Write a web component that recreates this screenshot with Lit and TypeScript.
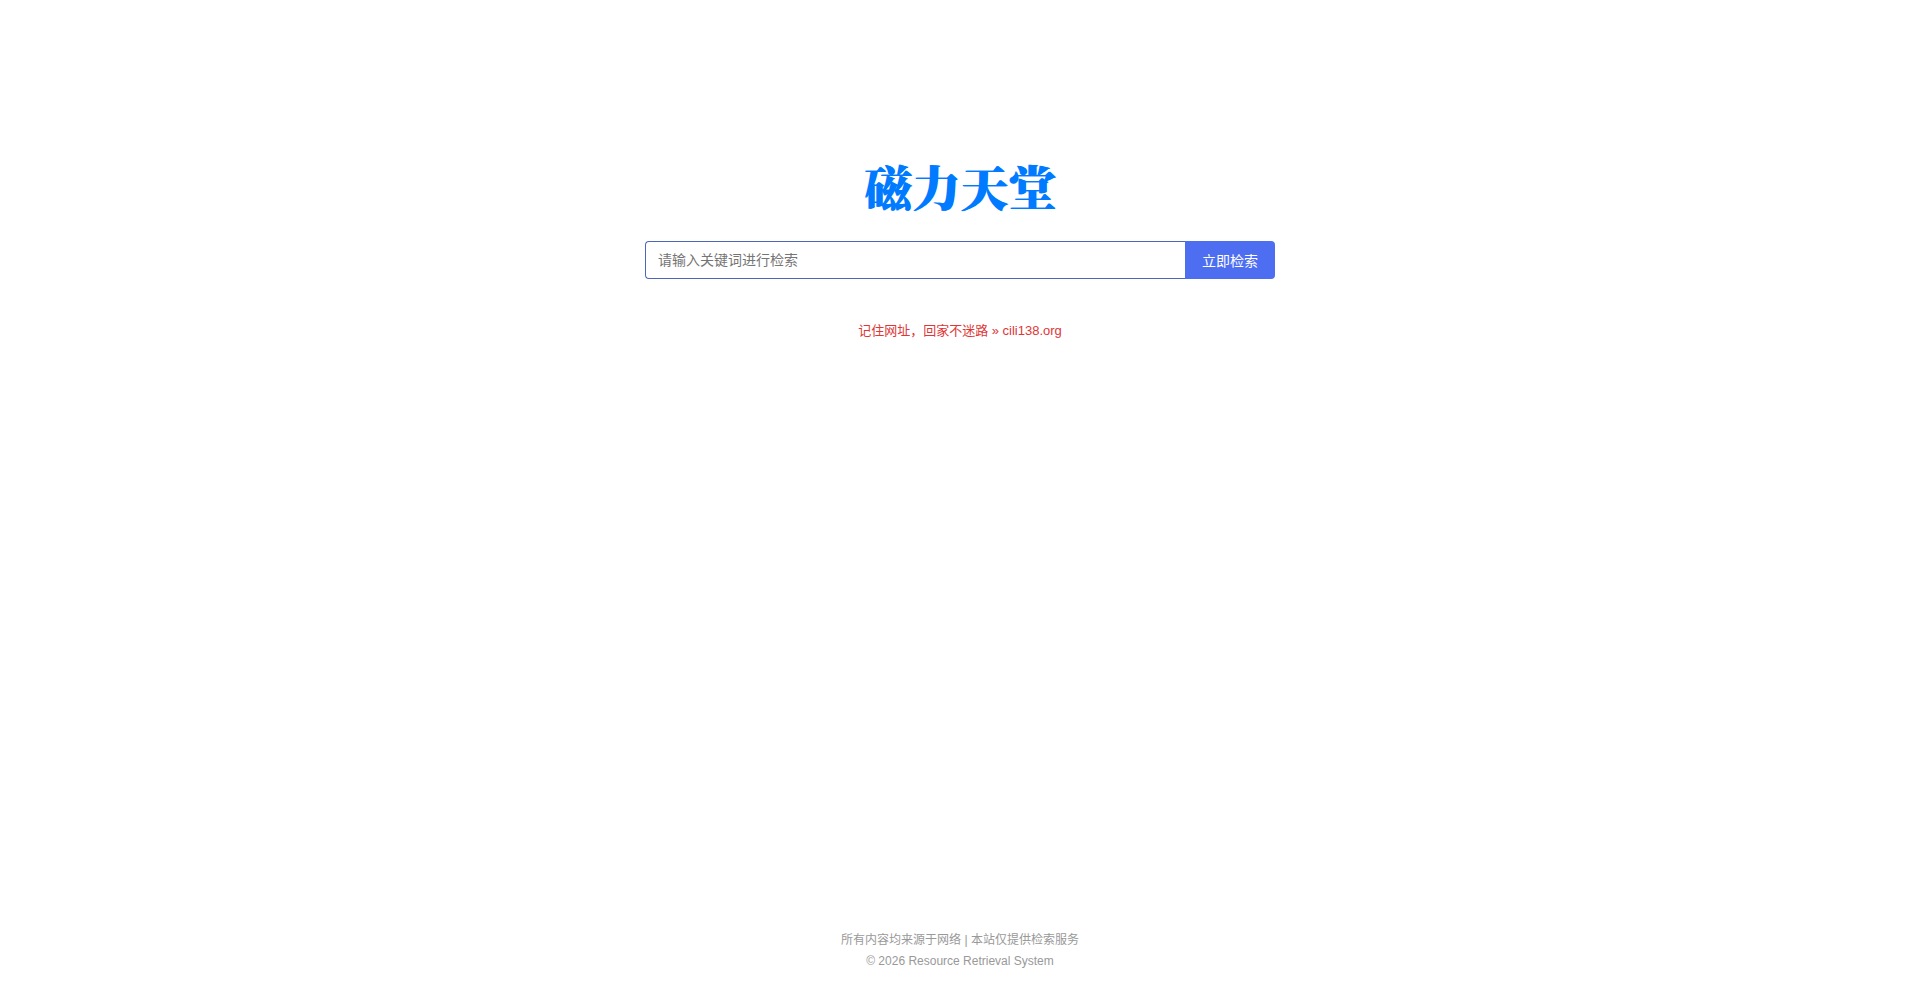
import { LitElement, html, css } from "lit";
import { customElement } from "lit/decorators.js";

@customElement("app-root")
export class AppRoot extends LitElement {
  static styles = css`
    :host {
      display: flex;
      flex-direction: column;
      align-items: center;
      box-sizing: border-box;
      min-height: 100vh;
      padding: 150px 16px 21px;
      background: #fff;
      font-family: "Liberation Sans", "Noto Sans CJK SC", sans-serif;
      font-size: 14px;
    }
    .logo {
      margin: 0;
      color: #007bff;
      font-family: "Noto Serif CJK SC", "Liberation Serif", serif;
      font-size: 48px;
      font-weight: 900;
      line-height: 72px;
      text-shadow: 1px 0 currentColor;
    }
    .search {
      display: flex;
      width: 100%;
      max-width: 630px;
      height: 38px;
      margin-top: 19px;
    }
    .field {
      flex: 1;
      min-width: 0;
      box-sizing: border-box;
      padding: 0 12px;
      border: 1px solid #4e66b8;
      border-right: 0;
      border-radius: 4px 0 0 4px;
      outline: none;
      background: #fff;
      font: inherit;
    }
    .field::placeholder {
      color: #757575;
    }
    .submit {
      width: 90px;
      padding: 0;
      border: 0;
      border-radius: 0 4px 4px 0;
      background: #4e6ef2;
      color: #fff;
      font: inherit;
      cursor: pointer;
    }
    .notice {
      margin: 42px 0 0;
      color: #e03636;
      font-size: 13px;
      line-height: 20px;
    }
    .footer {
      margin-top: auto;
      color: #999;
      font-size: 12px;
      line-height: 21px;
      text-align: center;
    }
    .footer p {
      margin: 0;
    }
  `;

  render() {
    return html`
      <h1 class="logo">磁力天堂</h1>
      <form class="search" @submit=${(e: Event) => e.preventDefault()}>
        <input class="field" type="text" aria-label="关键词" placeholder="请输入关键词进行检索" />
        <button class="submit" type="submit">立即检索</button>
      </form>
      <p class="notice">记住网址，回家不迷路 » cili138.org</p>
      <footer class="footer">
        <p>所有内容均来源于网络 | 本站仅提供检索服务</p>
        <p>© 2026 Resource Retrieval System</p>
      </footer>
    `;
  }
}
